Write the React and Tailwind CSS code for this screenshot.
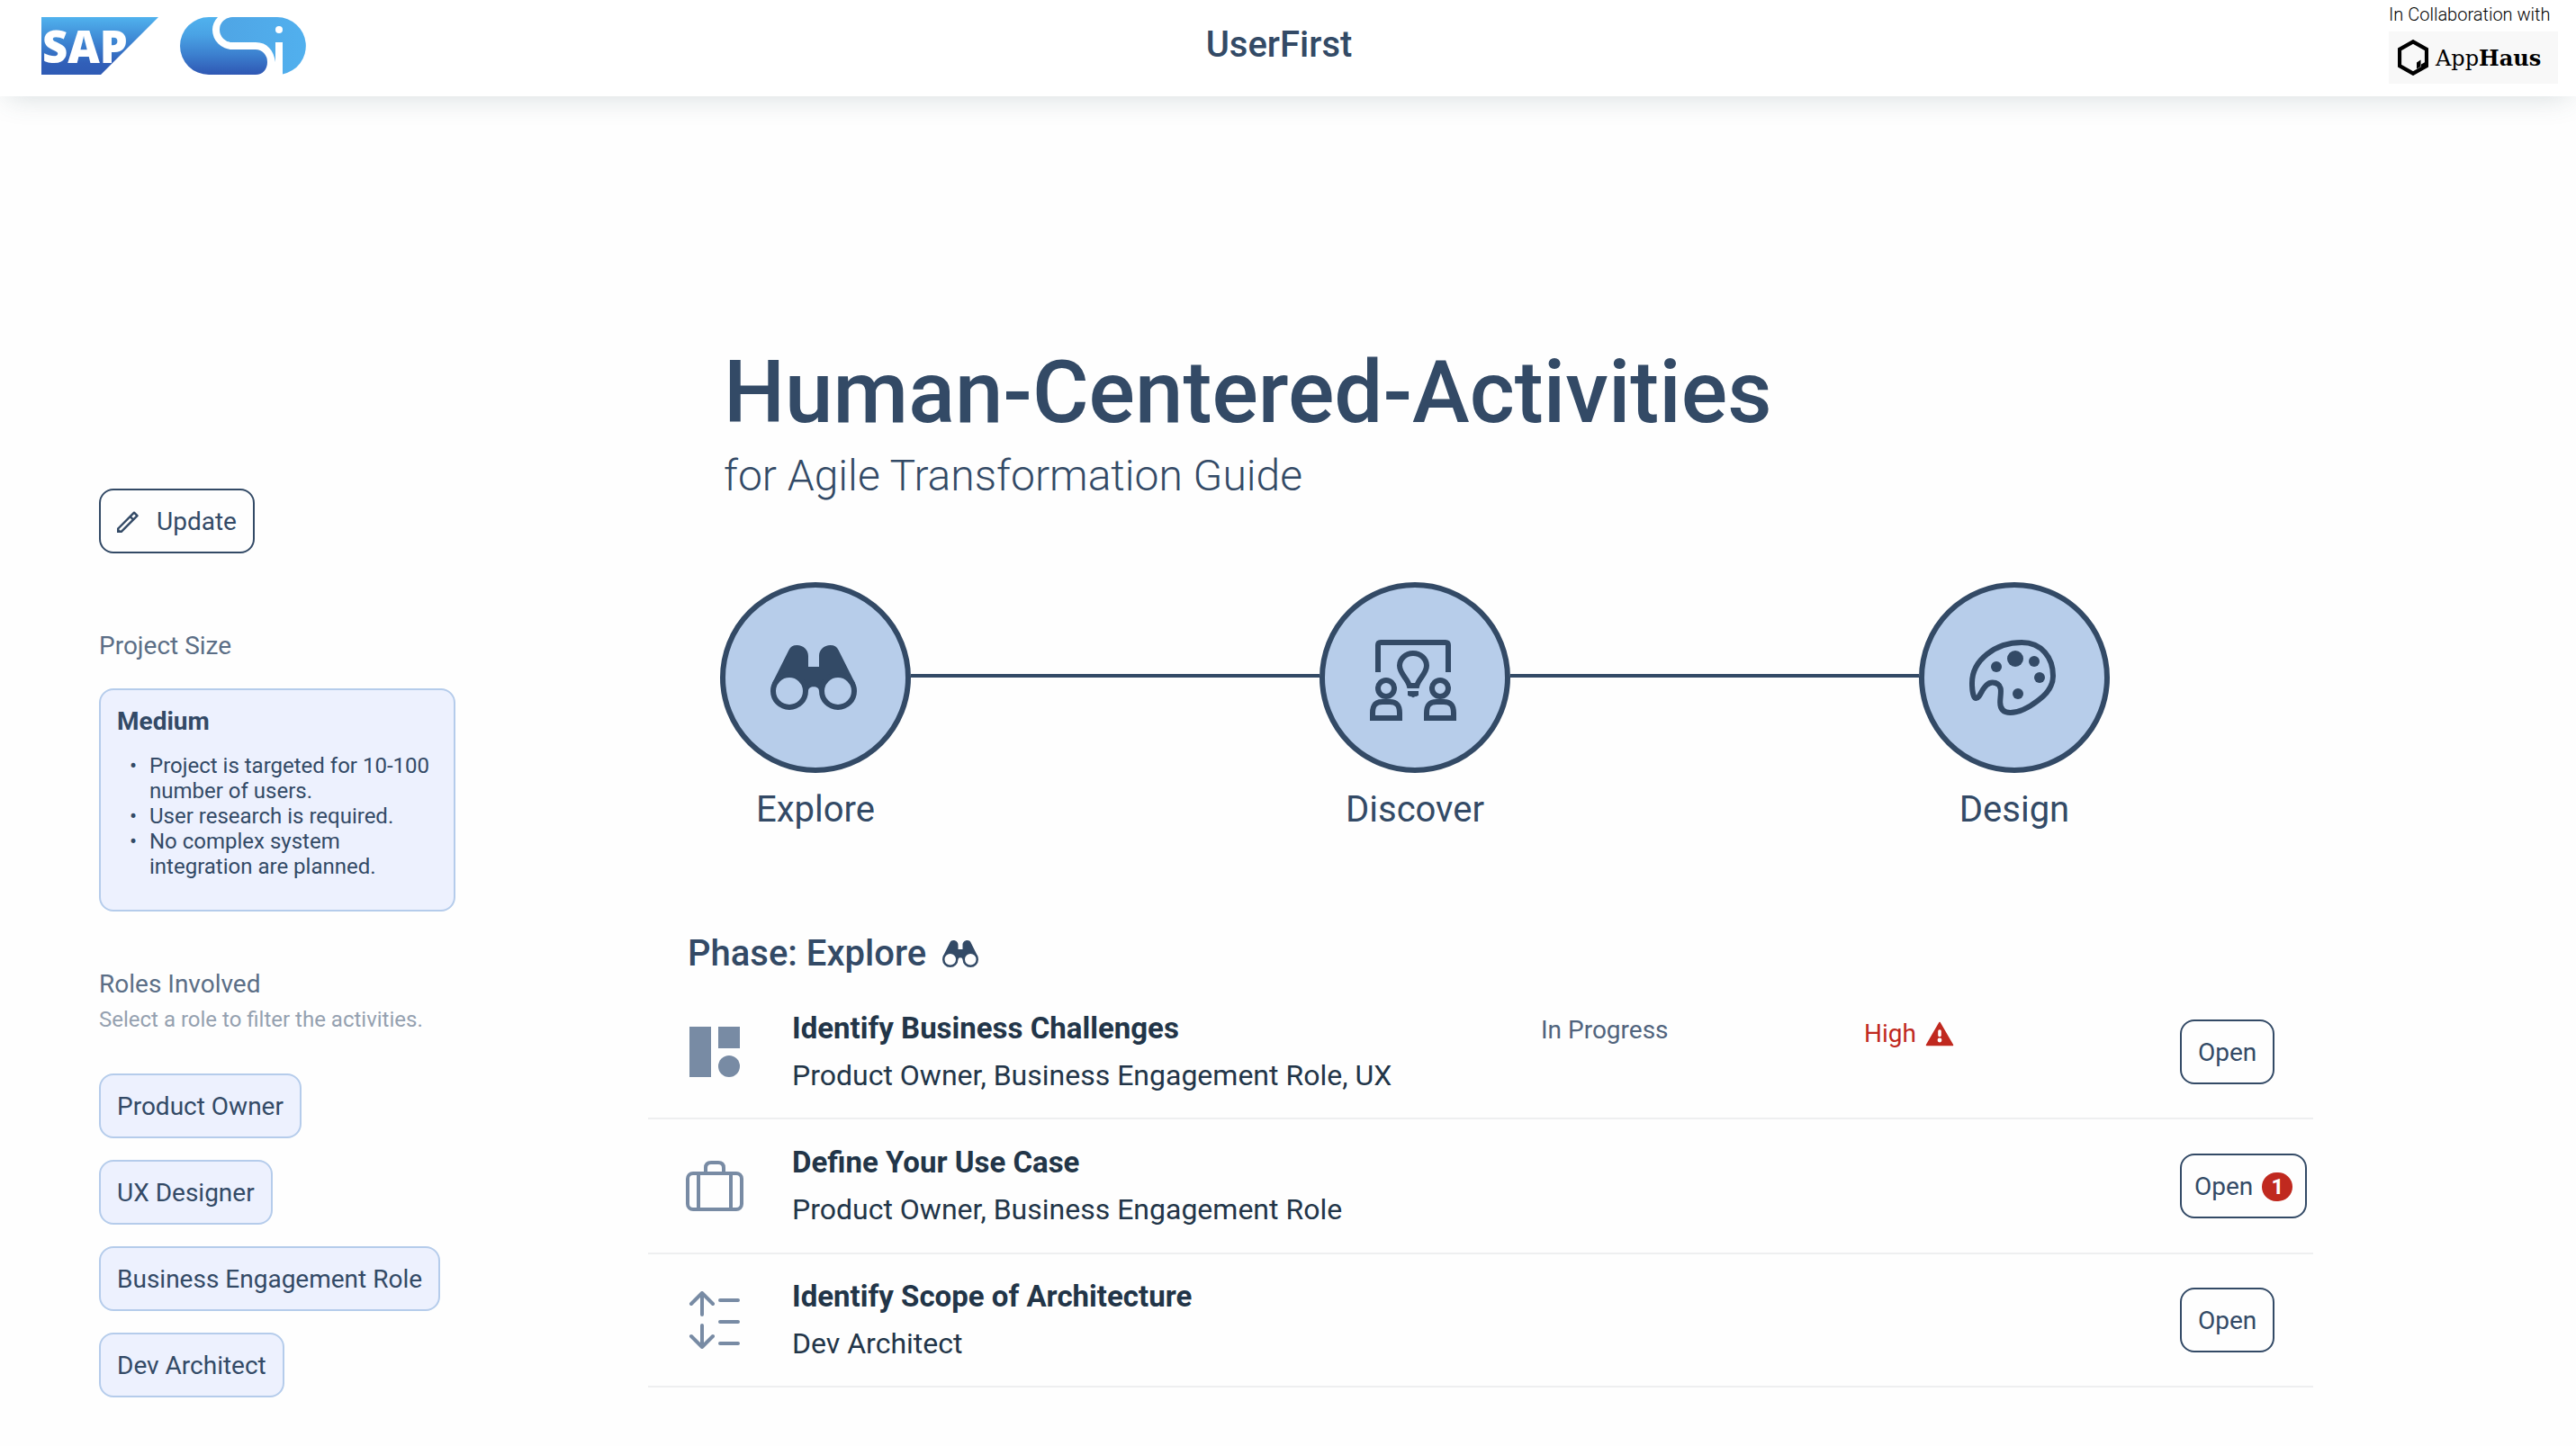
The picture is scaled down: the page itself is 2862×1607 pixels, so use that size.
const roles = ["Product Owner", "UX Designer", "Business Engagement Role", "Dev Architect"];

const sizeNotes = [
  "Project is targeted for 10-100 number of users.",
  "User research is required.",
  "No complex system integration are planned.",
];

function SapLogo() {
  return (
    <svg viewBox="0 0 130 64" className="h-16 w-[130px] overflow-visible" role="img" aria-label="SAP">
      <defs>
        <linearGradient id="sapFill" x1="0" y1="0" x2="0" y2="1">
          <stop offset="0" stopColor="#50b2ee" />
          <stop offset="0.5" stopColor="#3a7dcd" />
          <stop offset="0.8" stopColor="#315fb8" />
          <stop offset="1" stopColor="#2f5bb5" />
        </linearGradient>
      </defs>
      <path d="M0 0H130L66 64H0Z" fill="url(#sapFill)" />
      <text x="1" y="51" fill="#fff" fontFamily="Open Sans, sans-serif" fontWeight="800" fontSize="49">
        SAP
      </text>
    </svg>
  );
}

function SiLogo() {
  return (
    <svg viewBox="0 0 140 64" className="h-16 w-[140px]" role="img" aria-label="Si">
      <defs>
        <linearGradient id="siDark" x1="0" y1="0" x2="0" y2="1">
          <stop offset="0" stopColor="#50b2ee" />
          <stop offset="0.3" stopColor="#4aa3e5" />
          <stop offset="0.65" stopColor="#3c80cf" />
          <stop offset="1" stopColor="#2f57b3" />
        </linearGradient>
        <linearGradient id="siLight" x1="0" y1="0" x2="1" y2="0">
          <stop offset="0" stopColor="#4fa5e5" />
          <stop offset="1" stopColor="#51b0ee" />
        </linearGradient>
      </defs>
      <path
        d="M32 0H42C38 4 36 9 36 14A22 22 0 0 0 58 36H84A13 14 0 0 1 97 50C97 58 92 64 84 64H32A32 32 0 0 1 32 0Z"
        fill="url(#siDark)"
      />
      <path
        d="M58 0H108A32 32 0 0 1 114 63.4V28H106V50C104 37 97 28 84 28H58A14 14 0 0 1 58 0Z"
        fill="url(#siLight)"
      />
      <circle cx="110" cy="14" r="4" fill="#fff" />
    </svg>
  );
}

function AppHausLogo() {
  return (
    <div className="flex h-[58px] w-[188px] items-center bg-[#f8f8f8] pl-[10px] text-black">
      <svg viewBox="0 0 34 40" className="h-10 w-[34px]" aria-hidden="true">
        <path d="M17 2.3 32 10.8V29.2L17 37.7 2 29.2V10.8Z" fill="none" stroke="currentColor" strokeWidth="4.2" />
        <path d="M21 25.5 25.5 22.5V30L21 32.5Z" fill="currentColor" />
        <path d="M26 27.5 32 24V31L26 34Z" fill="currentColor" />
      </svg>
      <span className="ml-2 pt-0.5 font-['DejaVu_Serif',serif] text-[24px] leading-8">
        App<b className="font-bold">Haus</b>
      </span>
    </div>
  );
}

function Binoculars({ className }) {
  return (
    <svg viewBox="0 0 16 16" className={className} aria-hidden="true">
      <path
        d="M.35 9L3.4 2.9C3.7 2.3 4.2 2 4.9 2C6.1 2 7 2.9 7 4V6H9V4C9 2.9 9.9 2 11.1 2C11.8 2 12.3 2.3 12.6 2.9L15.65 9V10.5H15.5A3 3 0 0 0 9.5 10.5H9C9 10 8.6 9.7 8 9.7S7 10 7 10.5H6.5A3 3 0 0 0 .5 10.5H.35Z"
        fill="currentColor"
      />
      <g fill="none" stroke="currentColor">
        <circle cx="3.5" cy="10.5" r="3" />
        <circle cx="12.5" cy="10.5" r="3" />
      </g>
    </svg>
  );
}

function Workshop({ className }) {
  return (
    <svg viewBox="0 0 16 16" className={className} fill="none" stroke="currentColor" aria-hidden="true">
      <path d="M1.5 7V2Q1.5 1.5 2 1.5H14Q14.5 1.5 14.5 2V7" />
      <path d="M7.3 9.5C7 8.2 5.5 7.3 5.5 5.8A2.5 2.3 0 0 1 10.5 5.8C10.5 7.3 9 8.2 8.7 9.5Z" />
      <path d="M7 10.5H9V11.3L8.6 11.5H8.4L8 11.7L7.6 11.5H7.4L7 11.3Z" fill="currentColor" stroke="none" />
      <circle cx="3" cy="10" r="1.5" />
      <circle cx="13" cy="10" r="1.5" />
      <path d="M.5 15.5V14.6C.5 13.2 1 12.5 2.3 12.5H3.7C5 12.5 5.5 13.2 5.5 14.6V15.5Z" />
      <path d="M10.5 15.5V14.6C10.5 13.2 11 12.5 12.3 12.5H13.7C15 12.5 15.5 13.2 15.5 14.6V15.5Z" />
    </svg>
  );
}

function Palette({ className }) {
  return (
    <svg viewBox="0 0 16 16" className={className} aria-hidden="true">
      <path
        d="M1.25 11.85C.7 11.85 .5 10.2 .5 9C.5 4.7 4.9 1.5 9.7 1.5C13.4 1.5 15.5 4.3 15.5 7.7C15.5 9.6 14.4 11 12.8 12.2C11 13.6 9 14.5 7.6 14.5C6.2 14.5 5.7 13.7 5.7 12.6C5.7 11.6 5.9 10.9 5.8 10.1C5.6 9.2 5.1 8.9 4.3 8.9C3.4 8.9 2.9 9.6 2.4 10.4C2 11.1 1.7 11.85 1.25 11.85Z"
        fill="none"
        stroke="currentColor"
      />
      <g fill="currentColor">
        <circle cx="5" cy="6" r="1" />
        <circle cx="8.5" cy="4.5" r="1.5" />
        <circle cx="12" cy="5" r="1" />
        <circle cx="13" cy="8" r="1" />
        <circle cx="9" cy="11" r="1" />
      </g>
    </svg>
  );
}

function Pencil() {
  return (
    <svg viewBox="0 0 24 24" className="size-6" fill="none" stroke="currentColor" strokeWidth="2.4" aria-hidden="true">
      <path d="M1.2 22.8V19.5L19 1.7L22.5 5.2L4.8 22.8Z" strokeLinejoin="round" />
      <path d="M14.6 6L18.2 9.6" />
      <path d="M0 18.5L5.5 24H0Z" fill="currentColor" stroke="none" />
    </svg>
  );
}

function Blocks() {
  return (
    <svg viewBox="0 0 64 64" className="size-16" fill="currentColor" aria-hidden="true">
      <path d="M4 4H28V60H4ZM36 4H60V28H36Z" />
      <circle cx="48" cy="48" r="12" />
    </svg>
  );
}

function Suitcase() {
  return (
    <svg viewBox="0 0 64 64" className="size-16" fill="none" stroke="currentColor" strokeWidth="4" aria-hidden="true">
      <rect x="2" y="18" width="60" height="40" rx="6" />
      <path d="M22 18V12Q22 6 28 6H36Q42 6 42 12V18M14 18V58M50 18V58" />
    </svg>
  );
}

function Scope() {
  return (
    <svg
      viewBox="0 0 64 64"
      className="size-16"
      fill="none"
      stroke="currentColor"
      strokeWidth="4"
      strokeLinecap="round"
      strokeLinejoin="round"
      aria-hidden="true"
    >
      <path d="M6 14L18 2L30 14M18 3V26M6 50L18 62L30 50M18 61V38M38 10H58M38 34H58M38 58H58" />
    </svg>
  );
}

function Warning() {
  return (
    <svg viewBox="0 0 32 28" className="h-7 w-8" aria-hidden="true">
      <path d="M16 1.5L30.5 26.5H1.5Z" fill="currentColor" stroke="currentColor" strokeWidth="1.5" strokeLinejoin="round" />
      <path d="M16 11V15.5" stroke="#fff" strokeWidth="3.6" strokeLinecap="round" />
      <circle cx="16" cy="21" r="2.4" fill="#fff" />
    </svg>
  );
}

const phases = [
  { name: "Explore", Icon: Binoculars },
  { name: "Discover", Icon: Workshop },
  { name: "Design", Icon: Palette },
];

const activities = [
  {
    name: "Identify Business Challenges",
    roles: "Product Owner, Business Engagement Role, UX",
    Icon: Blocks,
    status: "In Progress",
    priority: "High",
  },
  { name: "Define Your Use Case", roles: "Product Owner, Business Engagement Role", Icon: Suitcase, count: 1 },
  { name: "Identify Scope of Architecture", roles: "Dev Architect", Icon: Scope },
];

function Header() {
  return (
    <header className="grid h-[107px] grid-cols-[1fr_auto_1fr] items-start bg-white pr-5 shadow-[0_8px_32px_-8px_rgba(60,90,100,0.22)]">
      <div className="flex gap-6 pt-[19px] pl-[46px]">
        <SapLogo />
        <SiLogo />
      </div>
      <div className="pt-[26px] text-[40px] leading-[48px] font-medium">UserFirst</div>
      <div className="flex flex-col justify-self-end pt-1 text-black">
        <span className="text-[20px] leading-6 font-light">In Collaboration with</span>
        <div className="mt-[7px]">
          <AppHausLogo />
        </div>
      </div>
    </header>
  );
}

function Sidebar() {
  return (
    <aside className="flex w-[396px] shrink-0 flex-col items-start pt-[436px]">
      <button className="flex h-[72px] items-center gap-5 rounded-2xl border-2 border-[#334a66] px-[18px] pt-0.5 text-[28px] leading-8">
        <Pencil />
        Update
      </button>
      <h2 className="mt-[87px] text-[28px] leading-8 text-[#5b6e86]">Project Size</h2>
      <section className="mt-[31px] w-full rounded-2xl border-2 border-[#b5cceb] bg-[#edf1fe] px-[18px] pt-[19px] pb-[34px]">
        <h3 className="text-[28px] leading-8 font-bold">Medium</h3>
        <ul className="mt-[19px] text-[24px] leading-7">
          {sizeNotes.map((note) => (
            <li key={note} className="flex">
              <span className="w-9 shrink-0 pl-[14px]" aria-hidden="true">
                •
              </span>
              {note}
            </li>
          ))}
        </ul>
      </section>
      <h2 className="mt-[65px] text-[28px] leading-8 text-[#5b6e86]">Roles Involved</h2>
      <p className="mt-[9px] text-[24px] leading-7 text-[#95a1b0]">Select a role to filter the activities.</p>
      <div className="mt-[46px] flex flex-col items-start gap-6">
        {roles.map((role) => (
          <button
            key={role}
            className="h-[72px] rounded-2xl border-2 border-[#b5cceb] bg-[#edf1fe] px-[18px] pt-0.5 text-[28px] leading-8"
          >
            {role}
          </button>
        ))}
      </div>
    </aside>
  );
}

function PhaseSteps() {
  return (
    <nav className="mt-[90px] mr-[226px] ml-20 flex items-start" aria-label="Phases">
      {phases.map(({ name, Icon }, i) => (
        <div key={name} className={i ? "flex flex-1 items-start" : "flex items-start"}>
          {i > 0 && <div className="mt-[102px] h-1 flex-1 bg-[#334a66]" />}
          <button className="flex w-[212px] flex-col items-center">
            <span className="flex size-[212px] items-center justify-center rounded-full border-6 border-[#334a66] bg-[#b7cdea] pr-1">
              <Icon className="size-24" />
            </span>
            <span className="mt-[17px] text-[40px] leading-[48px]">{name}</span>
          </button>
        </div>
      ))}
    </nav>
  );
}

function Activities() {
  return (
    <table className="mt-[11px] w-full table-fixed text-left">
      <colgroup>
        <col className="w-40" />
        <col />
        <col className="w-[359px]" />
        <col className="w-[351px]" />
        <col className="w-[148px]" />
      </colgroup>
      <tbody>
        {activities.map(({ name, roles: who, Icon, status, priority, count }) => (
          <tr key={name} className={count ? "h-[150px] border-b-2 border-[#eeeff0]" : "h-[148px] border-b-2 border-[#eeeff0]"}>
            <td className="pl-[42px] text-[#788ba4]">
              <Icon />
            </td>
            <td className="text-[32px] leading-[52px] text-[#223548]">
              <div className="text-[33px] font-bold">{name}</div>
              <div>{who}</div>
            </td>
            <td className="pt-6 align-top text-[28px] leading-[52px] text-[#51647d]">{status}</td>
            <td className="pt-7 align-top text-[28px] leading-[52px] text-[#c0291f]">
              {priority && (
                <span className="flex items-center gap-[10px]">
                  {priority}
                  <Warning />
                </span>
              )}
            </td>
            <td>
              <button
                className={
                  count
                    ? "flex h-[72px] items-center gap-[10px] rounded-2xl border-2 border-[#334a66] px-[14px] pt-0.5 text-[28px] leading-8"
                    : "flex h-[72px] items-center rounded-2xl border-2 border-[#334a66] px-[18px] pt-0.5 text-[28px] leading-8"
                }
              >
                Open
                {count && (
                  <span className="flex h-8 w-[34px] items-center justify-center rounded-full bg-[#c0291f] text-[24px] leading-8 font-bold text-white">
                    {count}
                  </span>
                )}
              </button>
            </td>
          </tr>
        ))}
      </tbody>
    </table>
  );
}

export default function App() {
  return (
    <div className="min-h-screen bg-[#fefefe] font-[Roboto,sans-serif] text-[#334a66]">
      <Header />
      <div className="flex gap-[214px] pr-[292px] pb-10 pl-[110px]">
        <Sidebar />
        <main className="min-w-0 flex-1 pt-[273px]">
          <h1 className="pl-[84px] text-[96px] leading-[112px] font-medium">Human-Centered-Activities</h1>
          <p className="mt-[9px] pl-[84px] text-[48px] leading-[56px] font-light">for Agile Transformation Guide</p>
          <PhaseSteps />
          <h2 className="mt-28 flex items-center gap-[18px] pl-11 text-[40px] leading-[48px] font-medium">
            Phase: Explore
            <Binoculars className="size-10" />
          </h2>
          <Activities />
        </main>
      </div>
    </div>
  );
}
